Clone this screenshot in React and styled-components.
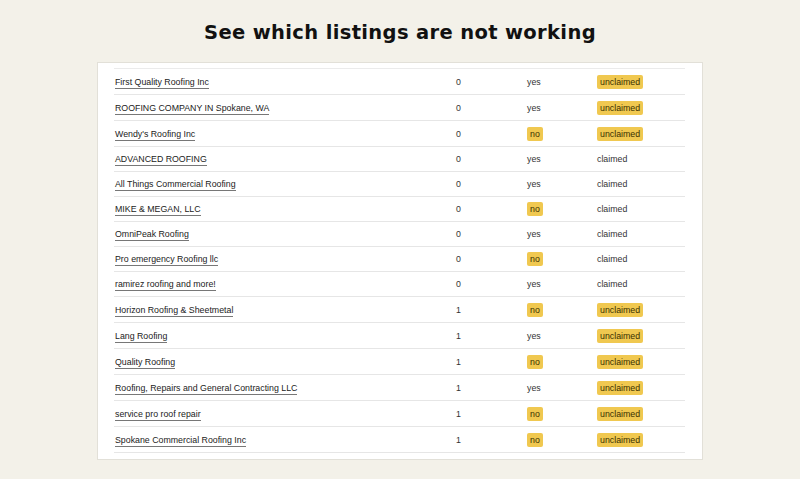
import styled, { createGlobalStyle } from "styled-components";

const Global = createGlobalStyle`
  body { margin: 0; background: #f3f1e9; font-family: "Liberation Sans", Arial, sans-serif; }
`;

const Page = styled.div`
  width: 800px;
  height: 479px;
  display: flex;
  flex-direction: column;
  align-items: center;
  overflow: hidden;
`;

const Title = styled.h1`
  margin: 20px 0 16px;
  font-family: "DejaVu Sans", sans-serif;
  font-size: 19.5px;
  font-weight: 700;
  letter-spacing: 0.35px;
  color: #111;
  line-height: 26px;
`;

const Panel = styled.div`
  width: 606px;
  height: 398px;
  background: #fff;
  border: 1px solid #e2e0d8;
  overflow: hidden;
  padding: 5px 17px 0 16px;
  box-sizing: border-box;
`;

const Table = styled.table`
  width: 100%;
  border-collapse: collapse;
  border-top: 1px solid #ebebeb;
  font-size: 8.8px;
  color: #333;
`;

const Td = styled.td`
  height: ${(p) => (p.$tall ? 25 : 24)}px;
  padding: 0 0 0 ${(p) => p.$pl || 0}px;
  border-bottom: 1px solid #e6e6e6;
  width: ${(p) => p.$w || "auto"};
`;

const Link = styled.span`
  border-bottom: 1px solid #777;
  padding-bottom: 1px;
  color: #222;
`;

const Badge = styled.span`
  background: #f0c850;
  border-radius: 2px;
  padding: 2px 3px;
  color: #3a3000;
`;

const rows = [
  ["First Quality Roofing Inc", 0, true, false],
  ["ROOFING COMPANY IN Spokane, WA", 0, true, false],
  ["Wendy's Roofing Inc", 0, false, false],
  ["ADVANCED ROOFING", 0, true, true],
  ["All Things Commercial Roofing", 0, true, true],
  ["MIKE & MEGAN, LLC", 0, false, true],
  ["OmniPeak Roofing", 0, true, true],
  ["Pro emergency Roofing llc", 0, false, true],
  ["ramirez roofing and more!", 0, true, true],
  ["Horizon Roofing & Sheetmetal", 1, false, false],
  ["Lang Roofing", 1, true, false],
  ["Quality Roofing", 1, false, false],
  ["Roofing, Repairs and General Contracting LLC", 1, true, false],
  ["service pro roof repair", 1, false, false],
  ["Spokane Commercial Roofing Inc", 1, false, false],
  ["Spokane Roofing Pros", 1, false, false],
];

export default function App() {
  return (
    <Page>
      <Global />
      <Title>See which listings are not working</Title>
      <Panel>
        <Table>
          <tbody>
            {rows.map(([name, n, ok, claimed]) => {
              const tall = !claimed;
              return (
                <tr key={name}>
                  <Td $tall={tall} $pl={1} $w="341px"><Link>{name}</Link></Td>
                  <Td $tall={tall} $w="71px">{n}</Td>
                  <Td $tall={tall} $w="70px">{ok ? "yes" : <Badge>no</Badge>}</Td>
                  <Td $tall={tall}>{claimed ? "claimed" : <Badge>unclaimed</Badge>}</Td>
                </tr>
              );
            })}
          </tbody>
        </Table>
      </Panel>
    </Page>
  );
}
